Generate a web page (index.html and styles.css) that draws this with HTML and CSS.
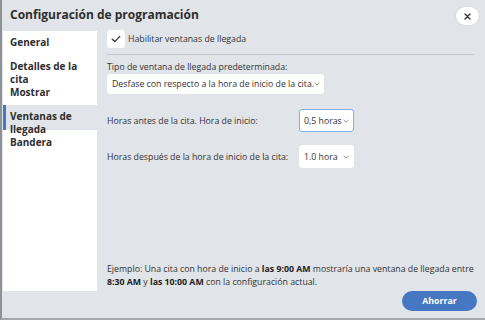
FILE: index.html
```html
<!DOCTYPE html>
<html lang="es">
<head>
    <meta charset="UTF-8">
    <title>Configuración de programación</title>
    <link rel="stylesheet" href="styles.css">
</head>
<body>
    <div class="dialog">
        <div class="dialog-header">
            <h1>Configuración de programación</h1>
            <button class="close-button" aria-label="Cerrar">
                <svg width="7" height="7" viewBox="0 0 7 7"><path d="M1 1L6 6M6 1L1 6" stroke="#333" stroke-width="1.4" stroke-linecap="round"/></svg>
            </button>
        </div>
        <div class="dialog-main">
            <ul class="side-nav">
                <li class="nav-item">General</li>
                <li class="nav-item">Detalles de la cita<span class="nav-sub">Mostrar</span></li>
                <li class="nav-item active">Ventanas de llegada<span class="nav-sub">Bandera</span></li>
            </ul>
            <div class="content">
                <div class="check-row">
                    <span class="checkbox">
                        <svg width="10" height="8" viewBox="0 0 10 8"><path d="M1.2 4.2L3.8 6.6L8.8 1.4" fill="none" stroke="#333" stroke-width="1.3" stroke-linecap="round" stroke-linejoin="round"/></svg>
                    </span>
                    <span>Habilitar ventanas de llegada</span>
                </div>
                <hr class="divider">
                <label class="field-label">Tipo de ventana de llegada predeterminada:</label>
                <div class="select select-wide">
                    <span>Desfase con respecto a la hora de inicio de la cita.</span>
                    <svg class="chevron" width="6" height="4" viewBox="0 0 6 4"><path d="M0.6 0.8L3 3.2L5.4 0.8" fill="none" stroke="#888" stroke-width="0.9"/></svg>
                </div>
                <div class="hours-grid">
                    <span>Horas antes de la cita. Hora de inicio:</span>
                    <div class="select select-small focused">
                        <span>0,5 horas</span>
                        <svg class="chevron" width="6" height="4" viewBox="0 0 6 4"><path d="M0.6 0.8L3 3.2L5.4 0.8" fill="none" stroke="#888" stroke-width="0.9"/></svg>
                    </div>
                    <span>Horas después de la hora de inicio de la cita:</span>
                    <div class="select select-small">
                        <span>1.0 hora</span>
                        <svg class="chevron" width="6" height="4" viewBox="0 0 6 4"><path d="M0.6 0.8L3 3.2L5.4 0.8" fill="none" stroke="#888" stroke-width="0.9"/></svg>
                    </div>
                </div>
                <p class="example">Ejemplo: Una cita con hora de inicio a <b>las 9:00 AM</b> mostraría una ventana de llegada entre <b>8:30 AM</b> y <b>las 10:00 AM</b> con la configuración actual.</p>
            </div>
        </div>
        <div class="dialog-footer">
            <button class="button-blue">Ahorrar</button>
        </div>
    </div>
</body>
</html>
```
FILE: styles.css
```css
:root {
    --dialog-bg: #e1e4e8;
    --text-color: #333;
    --blue: #4677c3;
    --focus-blue: #86aee6;
    --line-color: #c4c7cb;
}

body {
    margin: 0;
    font-family: "Open Sans", "Noto Sans", sans-serif;
    color: var(--text-color);
}

.dialog {
    width: 485px;
    height: 320px;
    box-sizing: border-box;
    display: flex;
    flex-direction: column;
    background-color: var(--dialog-bg);
    border-left: 2px solid #8e9196;
    border-bottom: 2px solid #a3a6aa;
}

.dialog-header {
    height: 30px;
    display: flex;
    align-items: center;
    justify-content: space-between;
    padding: 0 6px 0 8px;
}
h1 {
    margin: 0;
    font-size: 12px;
    font-weight: 700;
    color: #2e2e2e;
    line-height: 16px;
}
.close-button {
    width: 23px;
    height: 18px;
    margin-top: 2px;
    padding: 0;
    border: none;
    border-radius: 9px;
    background-color: white;
    box-shadow: 0 0 2px rgba(0, 0, 0, 0.12);
    display: flex;
    align-items: center;
    justify-content: center;
}

.dialog-main {
    flex: 1;
    display: flex;
}

.side-nav {
    list-style: none;
    margin: 1px 0 0 1px;
    padding: 0;
    width: 94px;
    background-color: white;
}
.nav-item {
    padding: 5px 7px 6px 7px;
    font-size: 10px;
    font-weight: 700;
    line-height: 13px;
    color: #2e2e2e;
}
.nav-sub {
    display: block;
    line-height: 12px;
    padding-bottom: 1px;
}
.nav-item.active {
    background: linear-gradient(to right, var(--blue) 3px, var(--dialog-bg) 3px) top left / 100% 25px no-repeat;
}

.content {
    flex: 1;
    display: flex;
    flex-direction: column;
    margin: 0 11px 0 10px;
    font-size: 8.75px;
    line-height: 12px;
}

.check-row {
    display: flex;
    align-items: center;
    gap: 3px;
    height: 18px;
}
.checkbox {
    width: 18px;
    height: 18px;
    border-radius: 3px;
    background-color: white;
    display: flex;
    align-items: center;
    justify-content: center;
}

.divider {
    border: none;
    border-top: 1px solid var(--line-color);
    margin: 6px 0 0 0;
}

.field-label {
    margin-top: 6px;
}

.select {
    display: flex;
    align-items: center;
    justify-content: space-between;
    box-sizing: border-box;
    background-color: white;
    border: 1px solid white;
    border-radius: 3px;
    padding: 0 4px 0 4px;
    white-space: nowrap;
}
.select-wide {
    width: 217px;
    height: 20px;
    margin-top: 1px;
}
.select-small {
    width: 55px;
    height: 23px;
}
.select.focused {
    border-color: var(--focus-blue);
}
.chevron {
    flex-shrink: 0;
}

.hours-grid {
    display: grid;
    grid-template-columns: 192px auto;
    row-gap: 13px;
    align-items: center;
    justify-items: start;
    margin-top: 15px;
}

.example {
    margin: auto 0 2px 0;
    line-height: 13px;
}
.example b {
    color: #222;
}

.dialog-footer {
    height: 27px;
    display: flex;
    justify-content: flex-end;
    padding-right: 8px;
}
.button-blue {
    width: 75px;
    height: 20px;
    padding: 0;
    border: none;
    border-radius: 10px;
    background-color: var(--blue);
    color: white;
    font-family: "Open Sans", "Noto Sans", sans-serif;
    font-size: 8.75px;
    font-weight: 700;
}
```
